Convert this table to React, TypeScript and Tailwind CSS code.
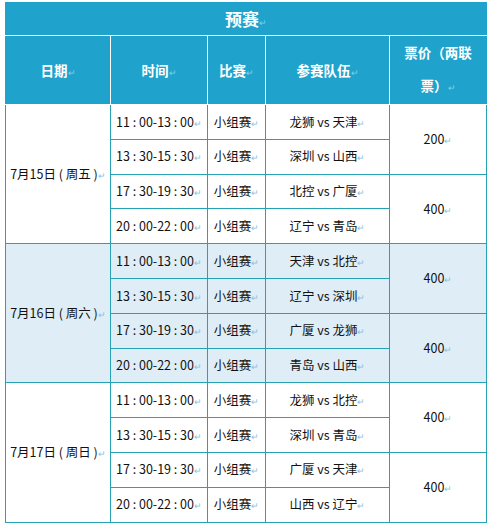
import React from "react";

const Ret = ({ header }: { header?: boolean }) => (
  <span className={header ? "text-[9px] text-[#7fd0ea] font-normal" : "text-[9px] text-[#8cbfe0]"}>↵</span>
);

type Group = {
  date: string;
  bg: string;
  rows: { time: string; teams: string }[];
  prices: string[];
};

const groups: Group[] = [
  {
    date: "7月15日 ( 周五 )",
    bg: "bg-white",
    rows: [
      { time: "11 : 00-13 : 00", teams: "龙狮 vs 天津" },
      { time: "13 : 30-15 : 30", teams: "深圳 vs 山西" },
      { time: "17 : 30-19 : 30", teams: "北控 vs 广厦" },
      { time: "20 : 00-22 : 00", teams: "辽宁 vs 青岛" },
    ],
    prices: ["200", "400"],
  },
  {
    date: "7月16日 ( 周六 )",
    bg: "bg-[#deedf6]",
    rows: [
      { time: "11 : 00-13 : 00", teams: "天津 vs 北控" },
      { time: "13 : 30-15 : 30", teams: "辽宁 vs 深圳" },
      { time: "17 : 30-19 : 30", teams: "广厦 vs 龙狮" },
      { time: "20 : 00-22 : 00", teams: "青岛 vs 山西" },
    ],
    prices: ["400", "400"],
  },
  {
    date: "7月17日 ( 周日 )",
    bg: "bg-white",
    rows: [
      { time: "11 : 00-13 : 00", teams: "龙狮 vs 北控" },
      { time: "13 : 30-15 : 30", teams: "深圳 vs 青岛" },
      { time: "17 : 30-19 : 30", teams: "广厦 vs 天津" },
      { time: "20 : 00-22 : 00", teams: "山西 vs 辽宁" },
    ],
    prices: ["400", "400"],
  },
];

const td = "border border-[#27a2b5] text-center align-middle p-0 whitespace-nowrap";
const th = "border border-white text-center align-middle p-0 font-bold text-white text-[13.5px]";

export default function App() {
  return (
    <div
      className="w-[488px] h-[527px] bg-white pt-[2px] pl-[5px] text-[#111] text-[12.5px]"
      style={{ fontFamily: '"Noto Sans CJK SC", "Noto Sans", sans-serif' }}
    >
      <table className="table-fixed border-collapse w-[481px]">
        <colgroup>
          <col className="w-[105px]" />
          <col className="w-[97px]" />
          <col className="w-[58px]" />
          <col className="w-[124px]" />
          <col className="w-[97px]" />
        </colgroup>
        <thead className="bg-[#1fa3cc]">
          <tr className="h-[33px]">
            <th colSpan={5} className={th + " !text-[17px] border-t-[#1fa3cc] border-l-[#1fa3cc] border-r-[#1fa3cc]"}>
              预赛<Ret header />
            </th>
          </tr>
          <tr className="h-[67px]">
            <th className={th + " border-l-[#1fa3cc]"}>日期<Ret header /></th>
            <th className={th}>时间<Ret header /></th>
            <th className={th}>比赛<Ret header /></th>
            <th className={th}>参赛队伍<Ret header /></th>
            <th className={th + " border-r-[#1fa3cc]"}>
              <div className="leading-[33px]">票价（两联</div>
              <div className="leading-[33px]">
                票）<Ret header />
              </div>
            </th>
          </tr>
        </thead>
        <tbody>
          {groups.map((g, gi) =>
            g.rows.map((r, ri) => (
              <tr key={gi + "-" + ri} className={"h-[34.8px] " + g.bg}>
                {ri === 0 && (
                  <td rowSpan={4} className={td}>
                    {g.date}
                    <Ret />
                  </td>
                )}
                <td className={td}>
                  {r.time}
                  <Ret />
                </td>
                <td className={td}>
                  小组赛
                  <Ret />
                </td>
                <td className={td}>
                  {r.teams}
                  <Ret />
                </td>
                {ri % 2 === 0 && (
                  <td rowSpan={2} className={td}>
                    {g.prices[ri / 2]}
                    <Ret />
                  </td>
                )}
              </tr>
            ))
          )}
        </tbody>
      </table>
    </div>
  );
}
